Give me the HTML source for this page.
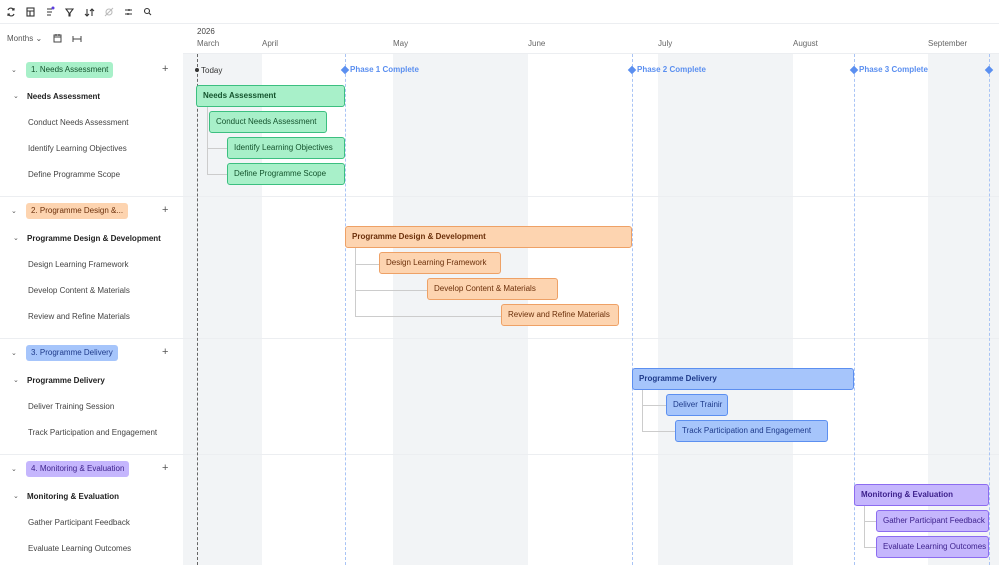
<!DOCTYPE html>
<html><head><meta charset="utf-8"><style>
*{margin:0;padding:0;box-sizing:border-box}
body{width:999px;height:565px;overflow:hidden;background:#fff;font-family:"Liberation Sans",sans-serif;font-size:8px;color:#333;position:relative}
.a{position:absolute;white-space:nowrap}
.band{position:absolute;top:54px;height:511px;background:#f2f4f6}
.bar{position:absolute;height:22px;border-radius:3px;border:1px solid;padding-left:6px;line-height:20px;font-size:8px;overflow:hidden;white-space:nowrap}
.g{background:#a8f0c9;border-color:#3cbf80;color:#14532d}
.o{background:#fdd4b0;border-color:#eea166;color:#6b2f0a}
.b{background:#a6c5fb;border-color:#5c8ff0;color:#1e3a8a}
.p{background:#c5b6fd;border-color:#8c6cf0;color:#3b1f8a}
.pl{position:absolute;top:54px;height:511px;border-left:1px dashed #a9c4f5}
.ph{position:absolute;top:65px;color:#5b8ff0;font-weight:bold;font-size:8px}
.dm{position:absolute;top:67px;width:6px;height:6px;background:#5b8ff0;transform:rotate(45deg)}
.sep{position:absolute;left:0;width:999px;height:1px;background:#eceef1}
.chip{position:absolute;height:16px;line-height:16px;padding:0 5px;border-radius:3px;font-size:8px}
.cv{position:absolute;font-size:7px;color:#555}
.ln{position:absolute;background:#ccc}
</style></head><body>
<!-- toolbar -->
<svg class="a" style="left:0;top:0" width="160" height="24" fill="none" stroke="#333" stroke-width="1.1">
<path d="M8 10a3 3 0 0 1 5-1l1 1M14 8v2h-2M14 14a3 3 0 0 1-5 1l-1-1M8 16v-2h2"/>
<rect x="27" y="8" width="7" height="8"/><path d="M27 11h7M30 11v5"/>
<path d="M47 9h5M47 12h5M47 15h4"/><circle cx="53" cy="8" r="1.5" fill="#5b3de0" stroke="none"/>
<path d="M66 9h7l-3 4v3h-1v-3z"/>
<path d="M87 9v7M85 14l2 2 2-2M92 16V9M90 11l2-2 2 2"/>
<circle cx="109" cy="12" r="3" stroke="#bbb"/><path d="M105 16l8-8" stroke="#bbb"/>
<path d="M125 10h7M125 14h7M129 9v2M128 13v2"/>
<circle cx="147" cy="11" r="2.5"/><path d="M149 13l2 2"/>
</svg>
<div class="sep" style="top:23px"></div>
<div class="a" style="left:7px;top:34px;color:#555">Months ⌄</div>
<svg class="a" style="left:53px;top:33px" width="40" height="12" fill="none" stroke="#444" stroke-width="1"><rect x="1" y="2" width="7" height="7"/><path d="M1 4h7M3 1v2M6 1v2"/><path d="M20 3v6M28 3v6M20 6h8"/></svg>
<div class="a" style="left:197px;top:27px;color:#444">2026</div>
<div class="a" style="left:197px;top:39px;color:#666">March</div>
<div class="a" style="left:262px;top:39px;color:#666">April</div>
<div class="a" style="left:393px;top:39px;color:#666">May</div>
<div class="a" style="left:528px;top:39px;color:#666">June</div>
<div class="a" style="left:658px;top:39px;color:#666">July</div>
<div class="a" style="left:793px;top:39px;color:#666">August</div>
<div class="a" style="left:928px;top:39px;color:#666">September</div>
<div class="sep" style="top:53px;left:183px"></div>
<!-- bands -->
<div class="band" style="left:183px;width:79px"></div>
<div class="band" style="left:393px;width:135px"></div>
<div class="band" style="left:658px;width:135px"></div>
<div class="band" style="left:928px;width:71px"></div>
<div class="sep" style="top:196px"></div>
<div class="sep" style="top:338px"></div>
<div class="sep" style="top:454px"></div>
<!-- today -->
<div class="a" style="left:197px;top:54px;height:511px;border-left:1px dashed #666"></div>
<div class="a" style="left:195px;top:68px;width:4px;height:4px;border-radius:2px;background:#333"></div>
<div class="a" style="left:201px;top:66px;color:#333">Today</div>
<!-- phases -->
<div class="pl" style="left:345px"></div><div class="dm" style="left:342px"></div><div class="ph" style="left:350px">Phase 1 Complete</div>
<div class="pl" style="left:632px"></div><div class="dm" style="left:629px"></div><div class="ph" style="left:637px">Phase 2 Complete</div>
<div class="pl" style="left:854px"></div><div class="dm" style="left:851px"></div><div class="ph" style="left:859px">Phase 3 Complete</div>
<div class="pl" style="left:989px"></div><div class="dm" style="left:986px"></div>
<!-- connectors -->
<div class="ln" style="left:207px;top:107px;width:1px;height:67px"></div>
<div class="ln" style="left:207px;top:148px;width:20px;height:1px"></div>
<div class="ln" style="left:207px;top:174px;width:20px;height:1px"></div>
<div class="ln" style="left:355px;top:248px;width:1px;height:68px"></div>
<div class="ln" style="left:355px;top:264px;width:24px;height:1px"></div>
<div class="ln" style="left:355px;top:290px;width:72px;height:1px"></div>
<div class="ln" style="left:355px;top:316px;width:146px;height:1px"></div>
<div class="ln" style="left:642px;top:390px;width:1px;height:42px"></div>
<div class="ln" style="left:642px;top:405px;width:24px;height:1px"></div>
<div class="ln" style="left:642px;top:431px;width:33px;height:1px"></div>
<div class="ln" style="left:864px;top:506px;width:1px;height:42px"></div>
<div class="ln" style="left:864px;top:521px;width:12px;height:1px"></div>
<div class="ln" style="left:864px;top:547px;width:12px;height:1px"></div>
<!-- bars -->
<div class="bar g" style="left:196px;top:85px;width:149px;font-weight:bold">Needs Assessment</div>
<div class="bar g" style="left:209px;top:111px;width:118px">Conduct Needs Assessment</div>
<div class="bar g" style="left:227px;top:137px;width:118px">Identify Learning Objectives</div>
<div class="bar g" style="left:227px;top:163px;width:118px">Define Programme Scope</div>
<div class="bar o" style="left:345px;top:226px;width:287px;font-weight:bold">Programme Design &amp; Development</div>
<div class="bar o" style="left:379px;top:252px;width:122px">Design Learning Framework</div>
<div class="bar o" style="left:427px;top:278px;width:131px">Develop Content &amp; Materials</div>
<div class="bar o" style="left:501px;top:304px;width:118px">Review and Refine Materials</div>
<div class="bar b" style="left:632px;top:368px;width:222px;font-weight:bold">Programme Delivery</div>
<div class="bar b" style="left:666px;top:394px;width:62px">Deliver Trainir</div>
<div class="bar b" style="left:675px;top:420px;width:153px">Track Participation and Engagement</div>
<div class="bar p" style="left:854px;top:484px;width:135px;font-weight:bold">Monitoring &amp; Evaluation</div>
<div class="bar p" style="left:876px;top:510px;width:113px">Gather Participant Feedback</div>
<div class="bar p" style="left:876px;top:536px;width:113px">Evaluate Learning Outcomes</div>
<!-- left panel -->
<div class="cv" style="left:11px;top:66px">⌄</div><div class="chip" style="left:26px;top:62px;background:#a8f0c9;color:#14532d">1. Needs Assessment</div><div class="a" style="left:162px;top:63px;font-size:11px;color:#555">+</div>
<div class="cv" style="left:13px;top:92px">⌄</div><div class="a" style="left:27px;top:92px;font-weight:bold;color:#222">Needs Assessment</div>
<div class="a" style="left:28px;top:118px;color:#444">Conduct Needs Assessment</div>
<div class="a" style="left:28px;top:144px;color:#444">Identify Learning Objectives</div>
<div class="a" style="left:28px;top:170px;color:#444">Define Programme Scope</div>
<div class="cv" style="left:11px;top:207px">⌄</div><div class="chip" style="left:26px;top:203px;background:#fdd4b0;color:#6b2f0a">2. Programme Design &amp;...</div><div class="a" style="left:162px;top:204px;font-size:11px;color:#555">+</div>
<div class="cv" style="left:13px;top:234px">⌄</div><div class="a" style="left:27px;top:234px;font-weight:bold;color:#222">Programme Design &amp; Development</div>
<div class="a" style="left:28px;top:260px;color:#444">Design Learning Framework</div>
<div class="a" style="left:28px;top:286px;color:#444">Develop Content &amp; Materials</div>
<div class="a" style="left:28px;top:312px;color:#444">Review and Refine Materials</div>
<div class="cv" style="left:11px;top:349px">⌄</div><div class="chip" style="left:26px;top:345px;background:#a6c5fb;color:#1e3a8a">3. Programme Delivery</div><div class="a" style="left:162px;top:346px;font-size:11px;color:#555">+</div>
<div class="cv" style="left:13px;top:376px">⌄</div><div class="a" style="left:27px;top:376px;font-weight:bold;color:#222">Programme Delivery</div>
<div class="a" style="left:28px;top:402px;color:#444">Deliver Training Session</div>
<div class="a" style="left:28px;top:428px;color:#444">Track Participation and Engagement</div>
<div class="cv" style="left:11px;top:465px">⌄</div><div class="chip" style="left:26px;top:461px;background:#c5b6fd;color:#3b1f8a">4. Monitoring &amp; Evaluation</div><div class="a" style="left:162px;top:462px;font-size:11px;color:#555">+</div>
<div class="cv" style="left:13px;top:492px">⌄</div><div class="a" style="left:27px;top:492px;font-weight:bold;color:#222">Monitoring &amp; Evaluation</div>
<div class="a" style="left:28px;top:518px;color:#444">Gather Participant Feedback</div>
<div class="a" style="left:28px;top:544px;color:#444">Evaluate Learning Outcomes</div>
</body></html>
